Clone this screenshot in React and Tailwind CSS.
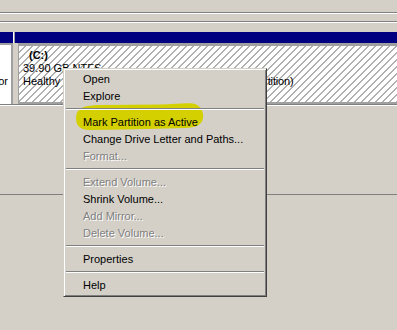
import React from "react";

const items = [
  { t: "Open" },
  { t: "Explore" },
  "sep",
  { t: "Mark Partition as Active" },
  { t: "Change Drive Letter and Paths..." },
  { t: "Format...", d: true },
  "sep",
  { t: "Extend Volume...", d: true },
  { t: "Shrink Volume..." },
  { t: "Add Mirror...", d: true },
  { t: "Delete Volume...", d: true },
  "sep",
  { t: "Properties" },
  "sep",
  { t: "Help" },
];

function Menu() {
  return (
    <div className="absolute left-[63px] top-[68px] w-[204px] h-[229px] bg-[#d4d0c8] border-t border-l border-[#d4d0c8] border-r border-b border-r-[#404040] border-b-[#404040] shadow-[inset_1px_1px_0_#ffffff,inset_-1px_-1px_0_#808080] py-[2px] px-[1px]">
      <svg
        className="absolute left-[-1px] top-[-1px] pointer-events-none"
        width="204"
        height="229"
        viewBox="63 68 204 229"
      >
        <path
          d="M76,118 C76,108 84,105 100,105 L160,104.5 C175,104 186,102.5 193,103.5 C201,105 204,112 203,118 C202,125 196,127.5 185,128 L127,129.5 L90,130 C80,130 76,126 76,118 Z"
          fill="#d4d000"
        />
      </svg>
      <div className="relative flex flex-col">
        {items.map((it, i) =>
          it === "sep" ? (
            <div key={i} className="h-[9px] pt-[3px] px-[1px]">
              <div className="h-px bg-[#808080]" />
              <div className="h-px bg-white" />
            </div>
          ) : (
            <div
              key={i}
              className={
                "h-[17px] leading-[17px] pl-[18px] whitespace-nowrap " +
                (it.d
                  ? "text-[#808080] [text-shadow:1px_1px_0_#ffffff]"
                  : "text-black")
              }
            >
              {it.t}
            </div>
          )
        )}
      </div>
    </div>
  );
}

export default function App() {
  return (
    <div className="relative w-[397px] h-[330px] overflow-hidden bg-[#d4d0c8] font-['Liberation_Sans',Arial,sans-serif] text-[11px] text-black">
      <div className="h-[12px]" />
      <div className="h-px bg-[#808080]" />
      <div className="h-px bg-white" />
      <div className="h-[7px]" />
      <div className="h-px bg-[#808080]" />
      <div className="h-px bg-white" />
      <div className="h-[9px]" />
      <div className="flex h-[11px]">
        <div className="w-[13px] bg-[#000080]" />
        <div className="w-px bg-white" />
        <div className="w-px bg-[#a0a0a0]" />
        <div className="flex-1 bg-[#000080]" />
      </div>
      <div className="flex h-[61px]">
        <div className="w-[11px] flex flex-col border-t-[2px] border-[#a0a0a0] bg-white overflow-hidden">
          <div className="flex justify-end pt-[30px] pr-[3px] leading-[13px] whitespace-nowrap">
            Mirror
          </div>
        </div>
        <div className="w-[2px] bg-[#a0a0a0]" />
        <div className="w-[5px]" />
        <div className="w-px bg-[#a0a0a0]" />
        <div className="flex-1 border-t-[3px] border-b-[2px] border-[#a0a0a0] bg-[repeating-linear-gradient(135deg,#ffffff_0px,#ffffff_4px,#b0b0b0_4px,#b0b0b0_4.95px)] overflow-hidden">
          <div className="pt-[3px] pl-[4px] leading-[13px] whitespace-nowrap">
            <div className="pl-[6px] font-bold">(C:)</div>
            <div>39.90 GB NTFS</div>
            <div>
              Healthy{" "}
              <span className="tracking-[-0.16px]">
                (Boot, Page File, Crash Dump, Primary Partition)
              </span>
            </div>
          </div>
        </div>
      </div>
      <div className="h-px bg-[#808080]" />
      <div className="h-px bg-white" />
      <div className="h-[88px]" />
      <div className="h-px bg-[#808080]" />
      <Menu />
    </div>
  );
}
